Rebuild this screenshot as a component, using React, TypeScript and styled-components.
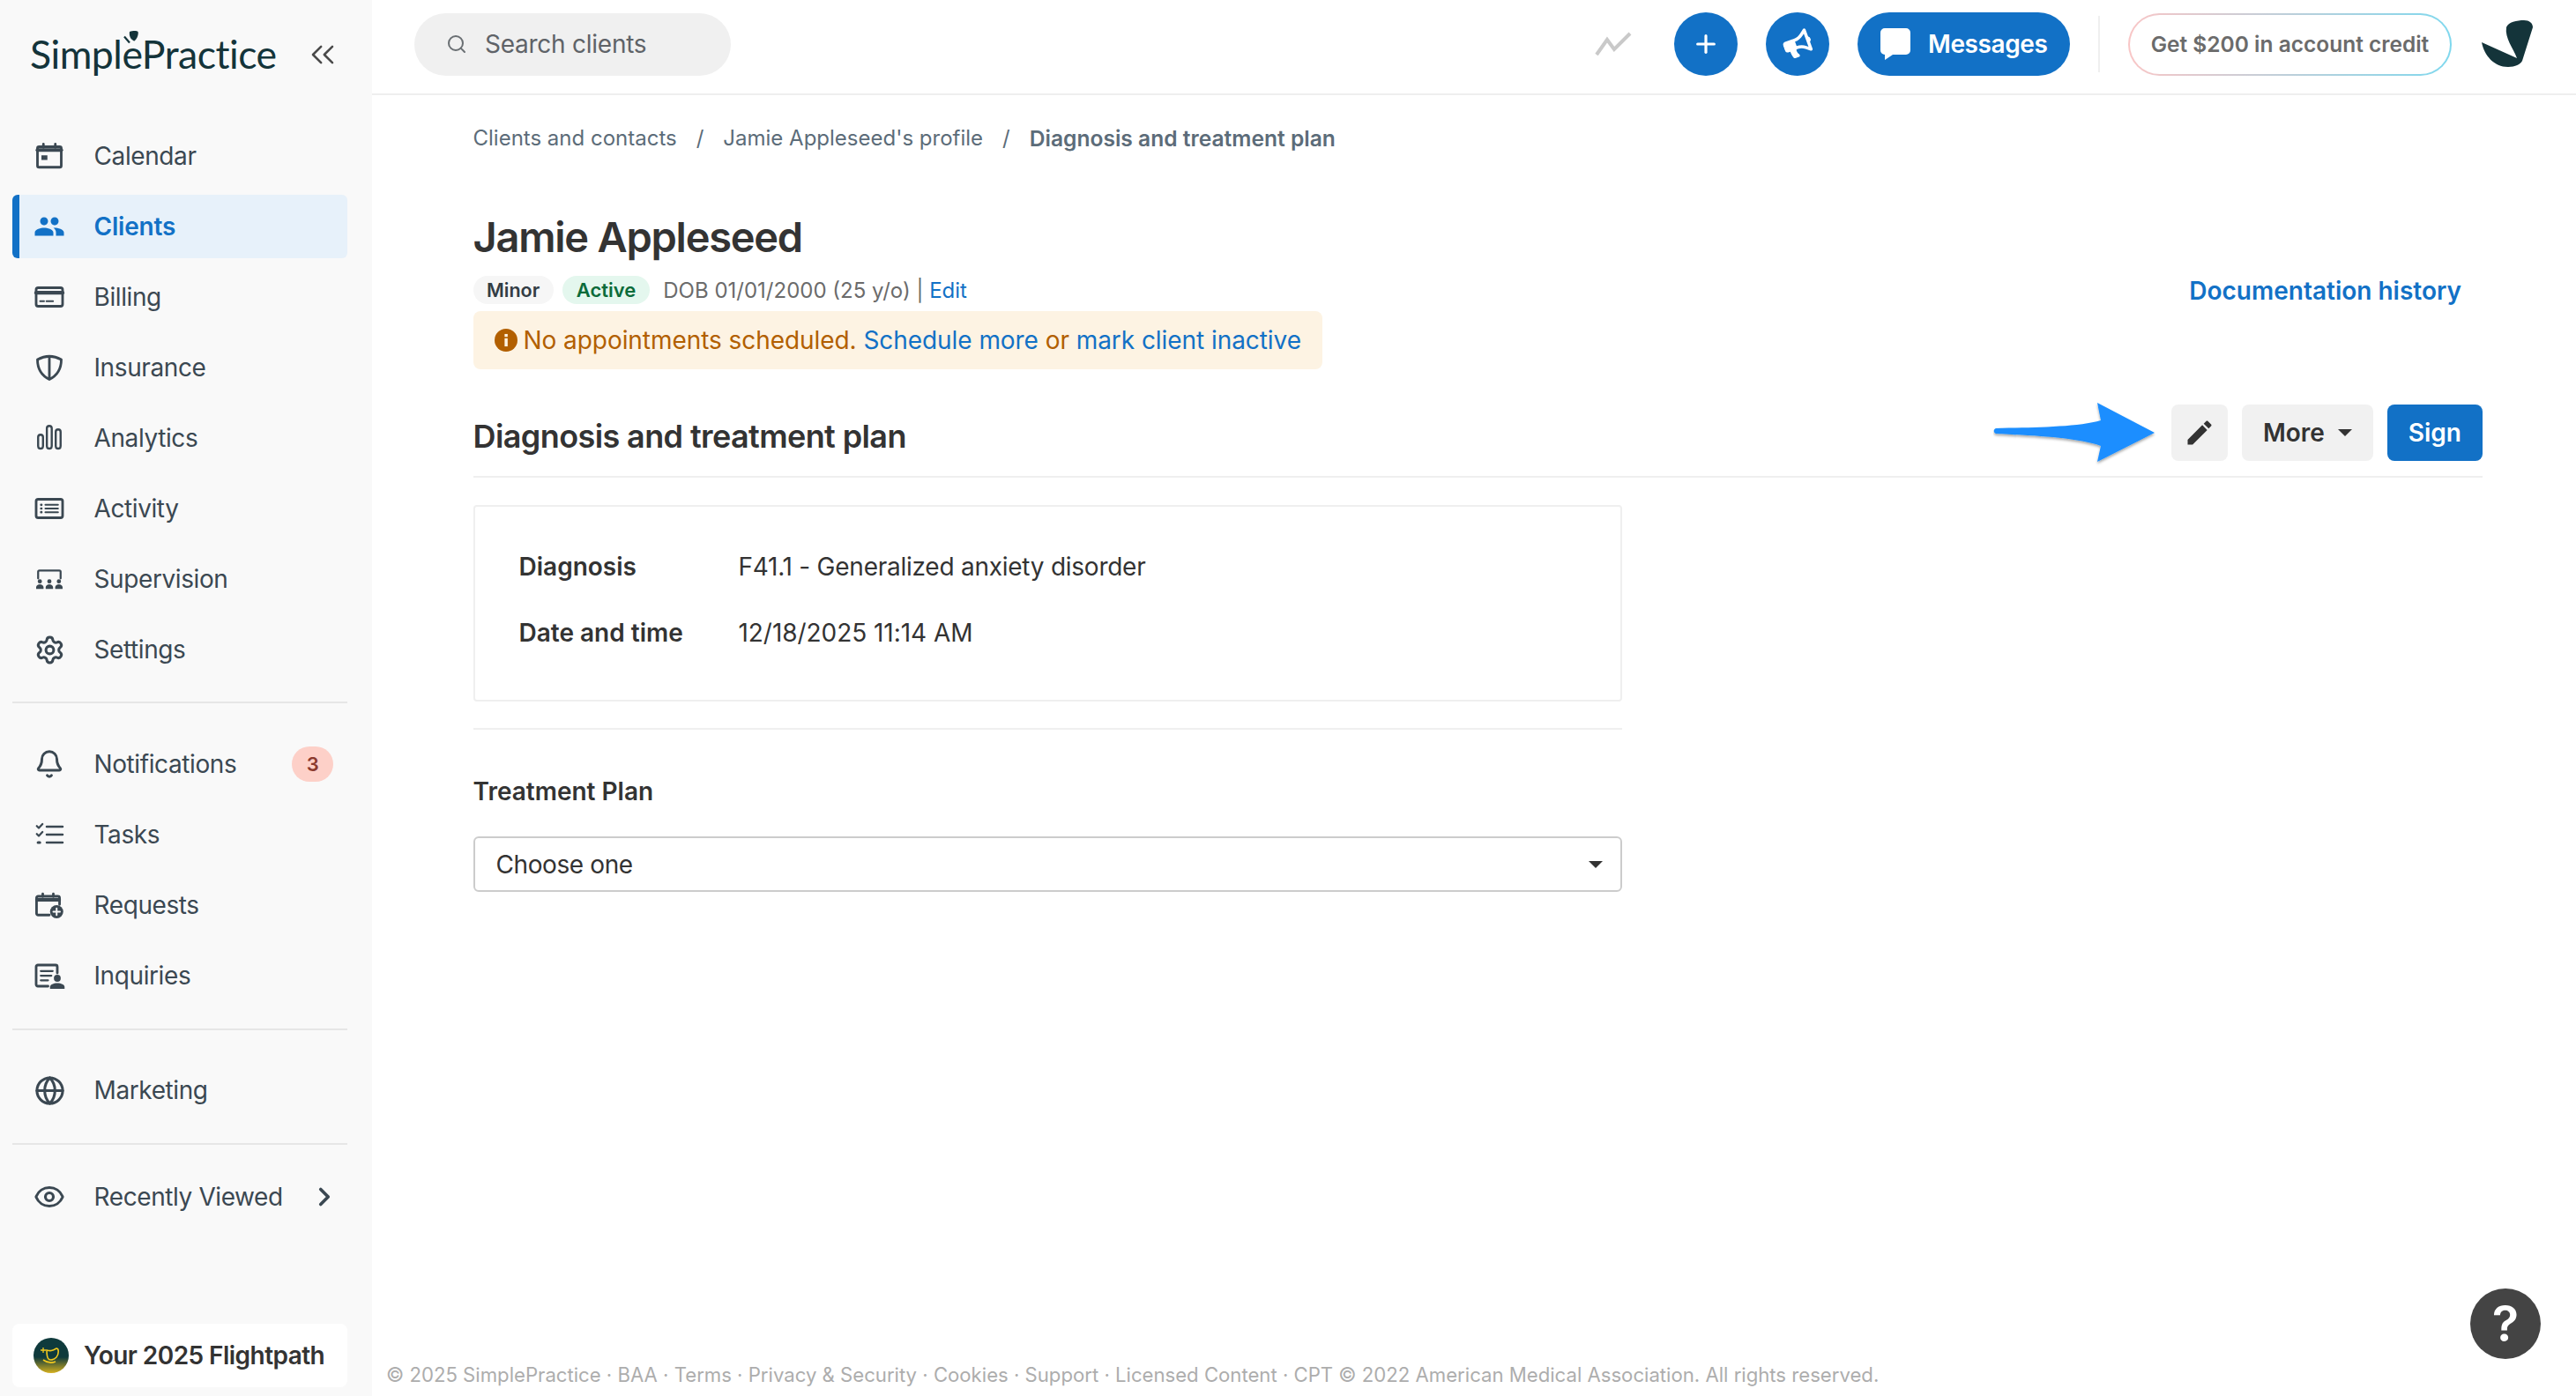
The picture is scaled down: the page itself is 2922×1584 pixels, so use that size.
import React from "react";
import styled, { createGlobalStyle } from "styled-components";
import { Bell, ChevronRight, ChevronsLeft, Eye, Globe, Plus, Search, Settings } from "lucide-react";
import { FaBullhorn } from "react-icons/fa";

const blue = "#1271c6";
const navText = "#3b4852";
const darkText = "#333333";
const line = "#efefef";

const GlobalStyle = createGlobalStyle`
  html, body {
    margin: 0;
    padding: 0;
    height: 100%;
    background: #ffffff;
    font-family: Inter, "Liberation Sans", sans-serif;
  }
  #root { height: 100%; }
  * { box-sizing: border-box; }
`;

const Page = styled.div`
  position: relative;
  display: flex;
  width: 100%;
  height: 100vh;
  overflow: hidden;
`;

/* sidebar */
const Sidebar = styled.aside`
  flex: 0 0 422px;
  display: flex;
  flex-direction: column;
  padding: 0 28px 10px 14px;
  background: #f9f9f9;
`;

const LogoRow = styled.div`
  height: 141px;
  padding: 27px 0 0 20px;
  display: flex;
  align-items: flex-start;
`;

const LogoWrap = styled.div`
  position: relative;
  width: 277px;
  color: #14343a;
  font-family: Lato, sans-serif;
  font-size: 44.6px;
  line-height: 68px;
  letter-spacing: -0.5px;
  white-space: nowrap;
`;

const Leaf = styled.svg`
  position: absolute;
  left: 106px;
  top: 8px;
`;

const Collapse = styled.button`
  display: flex;
  margin: 13px 0 0 33px;
  padding: 0;
  border: 0;
  background: none;
  color: #4a4a4a;
`;

const NavGroup = styled.nav<{ $top?: number; $bottom?: number; $rule?: boolean }>`
  display: flex;
  flex-direction: column;
  gap: 8px;
  margin-top: ${p => p.$top ?? 0}px;
  padding-bottom: ${p => p.$bottom ?? 0}px;
  border-bottom: ${p => (p.$rule ? "2px solid #e6e6e6" : "0")};
`;

const NavItem = styled.a<{ $active?: boolean }>`
  display: flex;
  align-items: center;
  height: 72px;
  width: 380px;
  padding-left: ${p => (p.$active ? "16px" : "24px")};
  border-left: ${p => (p.$active ? `8px solid ${blue}` : "0")};
  border-radius: 6px;
  background: ${p => (p.$active ? "#e7f1fa" : "transparent")};
  color: ${p => (p.$active ? blue : navText)};
  font-size: 28px;
  font-weight: ${p => (p.$active ? 600 : 400)};
  letter-spacing: ${p => (p.$active ? "-0.2px" : "-0.4px")};
  white-space: nowrap;
`;

const IconBox = styled.span`
  flex: 0 0 36px;
  height: 36px;
  margin-right: 32.5px;
  display: flex;
  align-items: center;
  justify-content: center;
`;

const Badge = styled.span`
  margin-left: auto;
  margin-right: 16px;
  width: 47px;
  height: 40px;
  border-radius: 20px;
  background: #fdd0c8;
  color: #8b3a2e;
  font-size: 22px;
  font-weight: 600;
  display: flex;
  align-items: center;
  justify-content: center;
`;

const RowEnd = styled.span`
  margin-left: auto;
  margin-right: 9px;
  display: flex;
  color: ${navText};
`;

const FlightCard = styled.div`
  margin-top: auto;
  width: 380px;
  height: 72px;
  padding-left: 24px;
  display: flex;
  align-items: center;
  gap: 17px;
  background: #ffffff;
  border-radius: 8px;
  color: ${darkText};
  font-size: 28px;
  font-weight: 600;
  letter-spacing: -0.55px;
  white-space: nowrap;
`;

/* main column */
const Main = styled.main`
  flex: 1;
  min-width: 0;
  display: flex;
  flex-direction: column;
`;

const TopBar = styled.header`
  height: 108px;
  flex: 0 0 108px;
  padding: 14px 49px 20px 48px;
  display: flex;
  align-items: center;
  border-bottom: 2px solid ${line};
`;

const SearchPill = styled.div`
  width: 359px;
  height: 71px;
  padding-left: 36px;
  display: flex;
  align-items: center;
  gap: 20px;
  border-radius: 36px;
  background: #f0f0f0;
  color: #5f6368;
  font-size: 28px;
  letter-spacing: -0.25px;
`;

const TopActions = styled.div`
  margin-left: auto;
  display: flex;
  align-items: center;
`;

const Trend = styled.svg`
  margin-right: 48px;
`;

const RoundButton = styled.button`
  width: 72px;
  height: 72px;
  margin-right: 32px;
  padding: 0;
  border: 0;
  border-radius: 50%;
  background: ${blue};
  color: #ffffff;
  display: flex;
  align-items: center;
  justify-content: center;
`;

const MessagesButton = styled.button`
  width: 241px;
  height: 72px;
  padding: 0 0 0 26px;
  border: 0;
  border-radius: 36px;
  background: ${blue};
  color: #ffffff;
  font-family: inherit;
  font-size: 28px;
  font-weight: 600;
  letter-spacing: -0.4px;
  display: flex;
  align-items: center;
  gap: 20px;
`;

const TopDivider = styled.span`
  width: 2px;
  height: 64px;
  margin: 0 32px;
  background: ${line};
`;

const CreditPill = styled.a`
  width: 367px;
  height: 71px;
  margin-right: 34px;
  display: flex;
  align-items: center;
  justify-content: center;
  border: 2px solid transparent;
  border-radius: 36px;
  background: linear-gradient(#fff, #fff) padding-box,
    linear-gradient(90deg, #f9c6c6, #7fd8ee) border-box;
  color: #6b6b6b;
  font-size: 24.5px;
  font-weight: 600;
  white-space: nowrap;
`;

const Content = styled.div`
  padding: 32px 106px 0 114.5px;
`;

const Breadcrumbs = styled.div`
  display: flex;
  gap: 22px;
  color: #5c6c79;
  font-size: 24px;
  line-height: 34px;
`;

const Crumb = styled.span<{ $current?: boolean }>`
  font-size: ${p => (p.$current ? "24.6px" : "24px")};
  font-weight: ${p => (p.$current ? 600 : 400)};
`;

const ClientBlock = styled.section`
  margin-top: 67px;
  display: flex;
  align-items: center;
  justify-content: space-between;
  padding-right: 24px;
`;

const ClientName = styled.h1`
  margin: 0;
  color: ${darkText};
  font-size: 47px;
  font-weight: 600;
  line-height: 56px;
  letter-spacing: -1.25px;
`;

const MetaRow = styled.div`
  margin-top: 16px;
  height: 32px;
  display: flex;
  align-items: center;
  color: #6b6b6b;
  font-size: 24px;
`;

const Chip = styled.span<{ $green?: boolean }>`
  height: 32px;
  margin-right: ${p => (p.$green ? "15px" : "10px")};
  padding: 0 ${p => (p.$green ? "16px" : "15.5px")};
  display: flex;
  align-items: center;
  border-radius: 16px;
  background: ${p => (p.$green ? "#e4f7ee" : "#f6f6f6")};
  color: ${p => (p.$green ? "#0b6b3a" : "#333d45")};
  font-size: ${p => (p.$green ? "22px" : "21.5px")};
  font-weight: 600;
`;

const TextLink = styled.a<{ $weight?: number }>`
  color: ${blue};
  font-weight: ${p => p.$weight ?? 400};
`;

const Alert = styled.div`
  margin-top: 8px;
  width: 963px;
  height: 66px;
  padding-left: 24px;
  display: flex;
  align-items: center;
  gap: 7px;
  border-radius: 8px;
  background: #fdf3e3;
  color: #b25f00;
  font-size: 28px;
  letter-spacing: -0.06px;
  white-space: pre;
`;

const HistoryLink = styled(TextLink)`
  font-size: 28px;
`;

const SectionHeader = styled.div`
  margin-top: 40px;
  padding-bottom: 17px;
  display: flex;
  align-items: center;
  border-bottom: 2px solid ${line};
`;

const SectionTitle = styled.h2`
  margin: 0 auto 0 0;
  padding-top: 8px;
  color: ${darkText};
  font-size: 36px;
  font-weight: 600;
  letter-spacing: -0.6px;
`;

const Arrow = styled.svg`
  margin: -6px 18px -6px 0;
`;

const ActionButton = styled.button<{ $primary?: boolean }>`
  height: 64px;
  margin-left: ${p => (p.$primary ? "16px" : "0")};
  padding: 0 24px;
  border: 0;
  border-radius: 8px;
  background: ${p => (p.$primary ? blue : "#f1f1f1")};
  color: ${p => (p.$primary ? "#ffffff" : darkText)};
  font-family: inherit;
  font-size: 28px;
  font-weight: 600;
  display: flex;
  align-items: center;
`;

const PencilButton = styled(ActionButton)`
  width: 64px;
  padding: 0;
  justify-content: center;
  margin-right: 16px;
`;

const Caret = styled.span<{ $color?: string }>`
  width: 0;
  height: 0;
  margin-left: 15px;
  border-left: 8px solid transparent;
  border-right: 8px solid transparent;
  border-top: 8px solid ${p => p.$color ?? darkText};
`;

const Narrow = styled.div`
  width: 1303px;
`;

const InfoPanel = styled.dl`
  margin: 31px 0 0;
  height: 223px;
  padding: 51px 50px 0;
  border: 2px solid ${line};
  border-radius: 4px;
  display: grid;
  grid-template-columns: 249px 1fr;
  grid-auto-rows: 34px;
  row-gap: 41px;
  align-items: center;
  color: ${darkText};
  font-size: 28px;
`;

const InfoLabel = styled.dt`
  font-weight: 600;
`;

const InfoValue = styled.dd<{ $tight?: boolean }>`
  margin: 0;
  letter-spacing: ${p => (p.$tight ? "-0.25px" : "-0.05px")};
`;

const PanelRule = styled.hr`
  margin: 30px 0 0;
  border: 0;
  border-top: 2px solid ${line};
`;

const FieldLabel = styled.label`
  display: block;
  margin-top: 53px;
  color: ${darkText};
  font-size: 28px;
  font-weight: 600;
  line-height: 34px;
`;

const SelectBox = styled.div`
  margin-top: 34px;
  height: 63px;
  padding: 0 20px 0 24px;
  display: flex;
  align-items: center;
  justify-content: space-between;
  border: 2px solid #cccccc;
  border-radius: 6px;
  color: ${darkText};
  font-size: 28px;
  letter-spacing: -0.4px;
`;

const Footer = styled.footer`
  margin-top: auto;
  padding: 0 0 9px 16px;
  color: #adadad;
  font-size: 22.15px;
  line-height: 30px;
  white-space: nowrap;
`;

const HelpButton = styled.button`
  position: absolute;
  right: 40px;
  bottom: 42px;
  width: 80px;
  height: 80px;
  padding: 0;
  border: 0;
  border-radius: 50%;
  background: #444444;
  color: #ffffff;
  font-family: inherit;
  font-size: 56px;
  font-weight: 600;
  line-height: 80px;
`;

/* icons */
const Ico = ({ children, fill }: { children: React.ReactNode; fill?: boolean }) => (
  <svg
    width="36"
    height="36"
    viewBox="0 0 24 24"
    fill={fill ? "currentColor" : "none"}
    stroke={fill ? "none" : "currentColor"}
    strokeWidth="1.9"
    strokeLinecap="round"
    strokeLinejoin="round"
  >
    {children}
  </svg>
);

const CalendarIcon = () => (
  <Ico>
    <rect x="3" y="5" width="18" height="15.500" rx="1.200" />
    <path d="M3 7.500h18" strokeWidth="2.800" />
    <path d="M7.500 3v2.500M16.500 3v2.500" />
    <rect x="6" y="11.500" width="4.500" height="3.500" fill="currentColor" stroke="none" />
  </Ico>
);

const ClientsIcon = () => (
  <Ico fill>
    <path d="M16 11c1.66 0 2.99-1.34 2.99-3S17.66 5 16 5c-1.66 0-3 1.34-3 3s1.34 3 3 3zm-8 0c1.66 0 2.99-1.34 2.99-3S9.66 5 8 5C6.34 5 5 6.34 5 8s1.34 3 3 3zm0 2c-2.33 0-7 1.17-7 3.5V19h14v-2.5c0-2.33-4.67-3.5-7-3.5zm8 0c-.29 0-.62.02-.97.05 1.16.84 1.97 1.97 1.97 3.45V19h6v-2.5c0-2.33-4.67-3.5-7-3.5z" />
  </Ico>
);

const BillingIcon = () => (
  <Ico>
    <rect x="2" y="5" width="20" height="14" rx="1.500" />
    <path d="M2 8.800h20" strokeWidth="2.800" />
    <path d="M5 15.200h3M9.800 15.200h5" strokeWidth="1.300" />
  </Ico>
);

const ShieldIcon = () => (
  <Ico>
    <path d="M12 3.500C9 3.500 6 4.300 3 6c0 6.500 3 12 9 15 6-3 9-8.500 9-15-3-1.700-6-2.500-9-2.500zM12 3.500V21" />
  </Ico>
);

const AnalyticsIcon = () => (
  <Ico>
    <rect x="3.500" y="9.500" width="3.700" height="10.500" rx="1.850" strokeWidth="1.600" />
    <rect x="10.100" y="2.800" width="3.700" height="17.200" rx="1.850" strokeWidth="1.600" />
    <rect x="16.800" y="5.500" width="3.700" height="14.500" rx="1.850" strokeWidth="1.600" />
  </Ico>
);

const ActivityIcon = () => (
  <Ico>
    <rect x="2" y="5" width="20" height="14" rx="1.500" />
    <path d="M9 9.200h9.500M9 12h9.500M9 14.800h9.500" strokeWidth="1.400" />
    <path d="M5.800 9.200h.2M5.800 12h.2M5.800 14.800h.2" strokeWidth="1.800" />
  </Ico>
);

const SupervisionIcon = () => (
  <Ico>
    <path d="M3.500 11.500V6.500a1 1 0 0 1 1-1h15a1 1 0 0 1 1 1v5" strokeWidth="1.500" />
    <g fill="currentColor" stroke="none">
      <circle cx="4.800" cy="13.800" r="1.600" />
      <circle cx="12" cy="13.800" r="1.600" />
      <circle cx="19.200" cy="13.800" r="1.600" />
      <path d="M2 19.500v-1.300c0-1.300 1.400-2.200 2.800-2.200s2.800.9 2.800 2.200v1.300zM9.200 19.500v-1.300c0-1.300 1.400-2.200 2.800-2.200s2.800.9 2.800 2.200v1.300zM16.400 19.500v-1.300c0-1.300 1.400-2.200 2.800-2.200s2.800.9 2.800 2.200v1.300z" />
    </g>
  </Ico>
);

const TasksIcon = () => (
  <Ico>
    <path d="M10 6h12M10 12h12M10 18h12" strokeWidth="1.700" />
    <path d="M2.500 5.500l1.500 1.500 2.800-3M2.500 11.500l1.500 1.500 2.800-3" strokeWidth="1.500" />
    <path d="M3.400 18h1.400" strokeWidth="2" />
  </Ico>
);

const RequestsIcon = () => (
  <Ico>
    <path d="M12 19.500H3.500a1.200 1.200 0 0 1-1.200-1.200V6.500a1.200 1.200 0 0 1 1.200-1.200h15a1.200 1.200 0 0 1 1.200 1.200v5" />
    <path d="M2.500 8h17" strokeWidth="2.600" />
    <path d="M7 3.500v2M15 3.500v2" />
    <circle cx="17.500" cy="17" r="5" fill="currentColor" stroke="none" />
    <path d="M17.500 14.500v5M15 17h5" stroke="#f9f9f9" strokeWidth="1.300" />
  </Ico>
);

const InquiriesIcon = () => (
  <Ico>
    <path d="M11 20H3.300A1.300 1.300 0 0 1 2 18.700V5.300A1.300 1.300 0 0 1 3.300 4h13.400A1.300 1.300 0 0 1 18 5.300V10" />
    <path d="M5.500 8.500h9M5.500 12h8M5.500 15.500h5.500" strokeWidth="1.500" />
    <g fill="currentColor" stroke="none">
      <circle cx="18" cy="14" r="2.600" />
      <path d="M12.500 22v-1.500c0-1.700 2.700-2.900 5.500-2.900s5.500 1.200 5.500 2.900V22z" />
    </g>
  </Ico>
);

const InfoDot = () => (
  <svg width="26" height="26" viewBox="0 0 24 24">
    <circle cx="12" cy="12" r="12" fill="#b25f00" />
    <rect x="10.500" y="10" width="3.200" height="8.500" fill="#fdf3e3" />
    <rect x="10.500" y="5.500" width="3.200" height="3" fill="#fdf3e3" />
  </svg>
);

export default function App() {
  return (
    <Page>
      <GlobalStyle />
      <Sidebar>
        <LogoRow>
          <LogoWrap>
            SimplePractice
            <Leaf width="22" height="18" viewBox="0 0 22 18">
              <path d="M7 1c3-1 8-1.500 9.500 0 1 3-1 8-4 10.500C9.500 11 6 7 7 1z" fill="#14343a" />
              <path d="M1 6.500l6 7" stroke="#14343a" strokeWidth="2.200" fill="none" />
            </Leaf>
          </LogoWrap>
          <Collapse aria-label="Collapse">
            <ChevronsLeft size={44} strokeWidth={1.4} />
          </Collapse>
        </LogoRow>

        <NavGroup $bottom={23} $rule>
          <NavItem><IconBox><CalendarIcon /></IconBox>Calendar</NavItem>
          <NavItem $active><IconBox><ClientsIcon /></IconBox>Clients</NavItem>
          <NavItem><IconBox><BillingIcon /></IconBox>Billing</NavItem>
          <NavItem><IconBox><ShieldIcon /></IconBox>Insurance</NavItem>
          <NavItem><IconBox><AnalyticsIcon /></IconBox>Analytics</NavItem>
          <NavItem><IconBox><ActivityIcon /></IconBox>Activity</NavItem>
          <NavItem><IconBox><SupervisionIcon /></IconBox>Supervision</NavItem>
          <NavItem><IconBox><Settings size={35} strokeWidth={2.1} /></IconBox>Settings</NavItem>
        </NavGroup>

        <NavGroup $top={33} $bottom={24} $rule>
          <NavItem>
            <IconBox><Bell size={34} strokeWidth={2.1} /></IconBox>Notifications
            <Badge>3</Badge>
          </NavItem>
          <NavItem><IconBox><TasksIcon /></IconBox>Tasks</NavItem>
          <NavItem><IconBox><RequestsIcon /></IconBox>Requests</NavItem>
          <NavItem><IconBox><InquiriesIcon /></IconBox>Inquiries</NavItem>
        </NavGroup>

        <NavGroup $top={32} $bottom={24} $rule>
          <NavItem><IconBox><Globe size={35} strokeWidth={2.1} /></IconBox>Marketing</NavItem>
        </NavGroup>

        <NavGroup $top={23}>
          <NavItem>
            <IconBox><Eye size={36} strokeWidth={2.1} /></IconBox>Recently Viewed
            <RowEnd><ChevronRight size={34} strokeWidth={2.6} /></RowEnd>
          </NavItem>
        </NavGroup>

        <FlightCard>
          <svg width="40" height="40" viewBox="0 0 40 40">
            <defs>
              <linearGradient id="flight" x1="0" y1="0" x2="0" y2="1">
                <stop offset="0.55" stopColor="#0f3a3c" />
                <stop offset="1" stopColor="#d6b11f" />
              </linearGradient>
            </defs>
            <circle cx="20" cy="20" r="20" fill="url(#flight)" />
            <path d="M15 14c4 1 6 1 11-2 3 0 3 6 0 10-3 3-7 4-9 2-2-2-2-6-2-10zM11 25c4 3 9 4 14 2" fill="none" stroke="#f2c81e" strokeWidth="1.600" />
            <path d="M11 11v6M8 14h6" stroke="#f2c81e" strokeWidth="1.300" />
          </svg>
          Your 2025 Flightpath
        </FlightCard>
      </Sidebar>

      <Main>
        <TopBar>
          <SearchPill>
            <Search size={24} color="#6a6f73" />
            Search clients
          </SearchPill>
          <TopActions>
            <Trend width="42" height="28" viewBox="0 0 42 28">
              <path d="M2 26L14 9l8 11L40 2" fill="none" stroke="#c9c9c9" strokeWidth="4" />
            </Trend>
            <RoundButton aria-label="Add"><Plus size={32} strokeWidth={2.4} /></RoundButton>
            <RoundButton aria-label="Announcements">
              <FaBullhorn size={32} style={{ transform: "rotate(-20deg)" }} />
            </RoundButton>
            <MessagesButton>
              <svg width="34" height="36" viewBox="0 0 34 36">
                <path d="M5 0h24a5 5 0 0 1 5 5v20a5 5 0 0 1-5 5H14l-9 6v-6a5 5 0 0 1-5-5V5a5 5 0 0 1 5-5z" fill="#fff" />
              </svg>
              Messages
            </MessagesButton>
            <TopDivider />
            <CreditPill>Get $200 in account credit</CreditPill>
            <svg width="58" height="54" viewBox="0 0 58 54">
              <path d="M28 8C30 2 40 0 48 0c6 0 10 3 10 8L46 46c-2 4-8 7-16 7C14 53 3 40 0 25l40 18C36 32 26 20 28 8z" fill="#14343a" />
            </svg>
          </TopActions>
        </TopBar>

        <Content>
          <Breadcrumbs>
            <Crumb>Clients and contacts</Crumb>
            <Crumb>/</Crumb>
            <Crumb>Jamie Appleseed's profile</Crumb>
            <Crumb>/</Crumb>
            <Crumb $current>Diagnosis and treatment plan</Crumb>
          </Breadcrumbs>

          <ClientBlock>
            <div>
              <ClientName>Jamie Appleseed</ClientName>
              <MetaRow>
                <Chip>Minor</Chip>
                <Chip $green>Active</Chip>
                DOB 01/01/2000 (25 y/o) |&nbsp;<TextLink>Edit</TextLink>
              </MetaRow>
              <Alert>
                <InfoDot />
                <span>No appointments scheduled. <TextLink>Schedule more</TextLink> or <TextLink>mark client inactive</TextLink></span>
              </Alert>
            </div>
            <HistoryLink $weight={600}>Documentation history</HistoryLink>
          </ClientBlock>

          <SectionHeader>
            <SectionTitle>Diagnosis and treatment plan</SectionTitle>
            <Arrow width="184" height="76" viewBox="0 0 184 76">
              <defs>
                <filter id="arrowShadow" x="-5%" y="-10%" width="110%" height="125%">
                  <feDropShadow dx="0" dy="2" stdDeviation="1.500" floodColor="#000" floodOpacity="0.35" />
                </filter>
              </defs>
              <path
                d="M3 33C40 32 95 32 122 24L118 4l65 34-65 33 4-18C95 43 40 41 3 39c-3-1-3-5 0-6z"
                fill="#1b8eff"
                filter="url(#arrowShadow)"
              />
            </Arrow>
            <PencilButton aria-label="Edit">
              <svg width="36" height="36" viewBox="0 0 24 24" fill={darkText}>
                <path d="M3 17.250V21h3.750L17.810 9.940l-3.750-3.750L3 17.250zM20.710 7.040c.39-.39.39-1.020 0-1.410l-2.340-2.340c-.39-.39-1.020-.39-1.410 0l-1.830 1.830 3.750 3.750 1.830-1.830z" />
              </svg>
            </PencilButton>
            <ActionButton>More<Caret /></ActionButton>
            <ActionButton $primary>Sign</ActionButton>
          </SectionHeader>

          <Narrow>
            <InfoPanel>
              <InfoLabel>Diagnosis</InfoLabel>
              <InfoValue $tight>F41.1 - Generalized anxiety disorder</InfoValue>
              <InfoLabel>Date and time</InfoLabel>
              <InfoValue>12/18/2025 11:14 AM</InfoValue>
            </InfoPanel>
            <PanelRule />
            <FieldLabel>Treatment Plan</FieldLabel>
            <SelectBox>
              Choose one
              <Caret />
            </SelectBox>
          </Narrow>
        </Content>

        <Footer>
          © 2025 SimplePractice · BAA · Terms · Privacy &amp; Security · Cookies · Support · Licensed Content · CPT © 2022 American Medical Association. All rights reserved.
        </Footer>
      </Main>

      <HelpButton aria-label="Help">?</HelpButton>
    </Page>
  );
}
